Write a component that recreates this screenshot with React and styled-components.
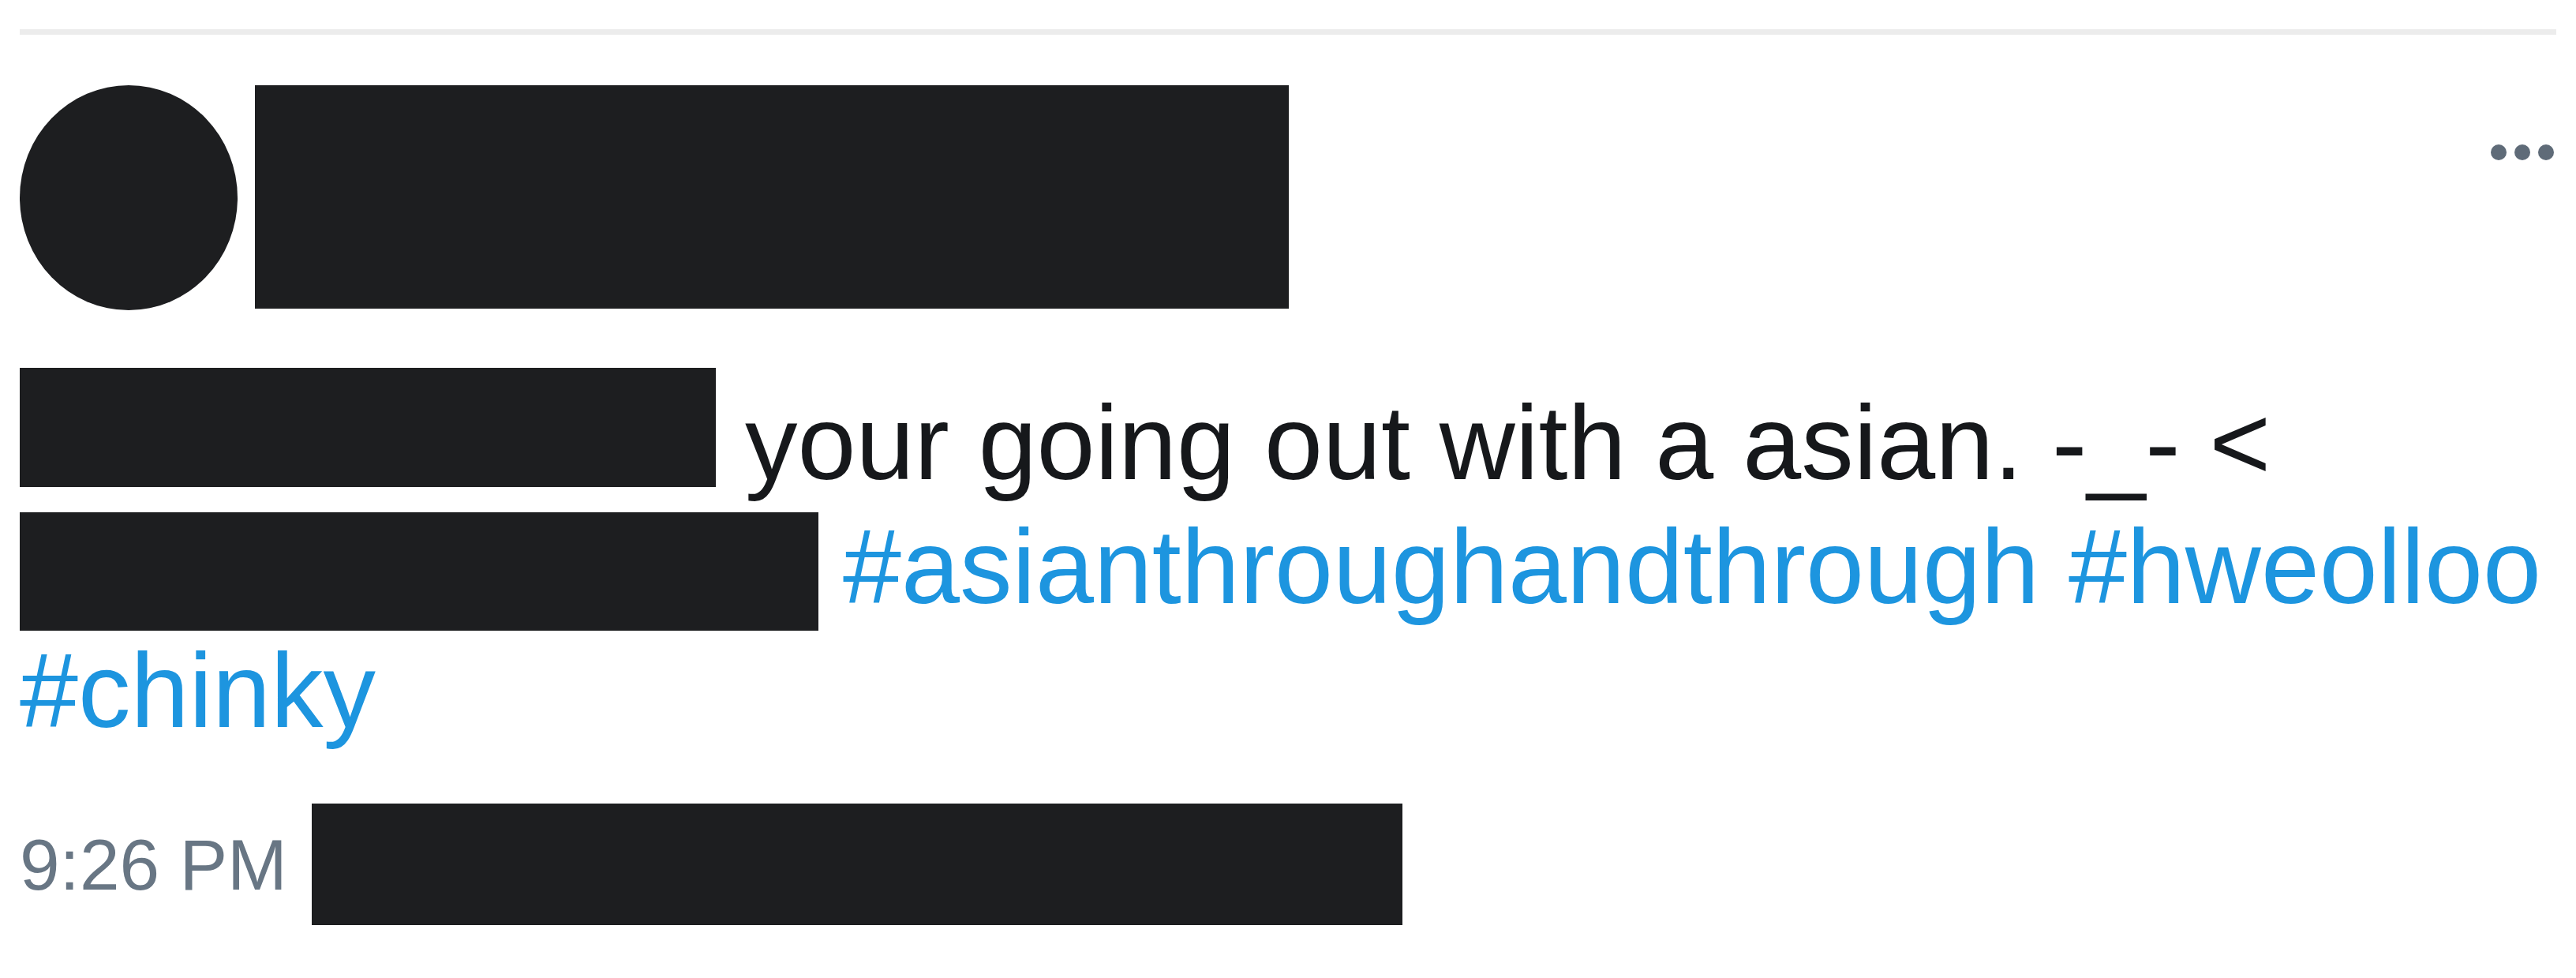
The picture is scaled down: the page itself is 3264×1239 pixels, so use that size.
import React from 'react';
import styled, { createGlobalStyle } from 'styled-components';

const GlobalStyle = createGlobalStyle`
  html, body {
    margin: 0;
    padding: 0;
    background: #ffffff;
  }
  body {
    font-family: "Liberation Sans", Arial, sans-serif;
    color: #16181b;
  }
`;

const Tweet = styled.article`
  padding: 37px 25px 0 25px;
  width: 3214px;
`;

const Divider = styled.div`
  height: 7px;
  background: #ececec;
`;

const Header = styled.header`
  display: flex;
  align-items: flex-start;
  gap: 22px;
  margin-top: 64px;
`;

const Avatar = styled.div`
  width: 276px;
  height: 285px;
  border-radius: 50%;
  background: #1d1e20;
  flex-shrink: 0;
`;

const NameBlock = styled.div`
  width: 1310px;
  height: 283px;
  background: #1d1e20;
`;

const MoreButton = styled.button`
  margin-left: auto;
  margin-top: 74px;
  margin-right: 2px;
  padding: 0;
  border: 0;
  background: none;
  color: #5f6b78;
  display: flex;
`;

const TweetText = styled.p`
  margin: 90px 0 0 0;
  font-size: 133px;
  line-height: 157px;
  color: #16181b;
`;

// redacted parts of the tweet, drawn as solid bars inside the text flow
const Redacted = styled.span`
  display: inline-block;
  width: ${(p) => p.$w}px;
  height: ${(p) => p.$h}px;
  background: #1d1e20;
  margin-top: ${(p) => p.$mt || 0}px;
  margin-bottom: ${(p) => p.$mb || 0}px;
  margin-right: ${(p) => p.$mr || 0}px;
  vertical-align: ${(p) => p.$va}px;
`;

const Hashtag = styled.a`
  color: #1d95df;
  text-decoration: none;
`;

const MetaRow = styled.div`
  display: flex;
  align-items: center;
  gap: 31px;
  margin-top: 64px;
`;

const Time = styled.span`
  font-size: 91px;
  line-height: 1;
  color: #687684;
`;

const MetaRedacted = styled.div`
  width: 1382px;
  height: 154px;
  background: #1d1e20;
`;

const Dots = () => (
  <svg width="82" height="22" viewBox="0 0 82 22" fill="currentColor">
    <circle cx="11" cy="11" r="10" />
    <circle cx="41" cy="11" r="10" />
    <circle cx="71" cy="11" r="10" />
  </svg>
);

export default function App() {
  return (
    <>
      <GlobalStyle />
      <Tweet>
        <Divider />
        <Header>
          <Avatar />
          <NameBlock />
          <MoreButton aria-label="More">
            <Dots />
          </MoreButton>
        </Header>
        <TweetText>
          <Redacted $w={882} $h={151} $mt={-20} $va={-10} />
          {' '}your going out with a asian. -_- &lt;{' '}
          <Redacted $w={1012} $h={150} $mb={-10} $mr={-6} $va={-25} />
          {' '}<Hashtag href="#">#asianthroughandthrough</Hashtag>
          {' '}<Hashtag href="#">#hweolloo</Hashtag>
          {' '}<Hashtag href="#">#chinky</Hashtag>
        </TweetText>
        <MetaRow>
          <Time>9:26 PM</Time>
          <MetaRedacted />
        </MetaRow>
      </Tweet>
    </>
  );
}
